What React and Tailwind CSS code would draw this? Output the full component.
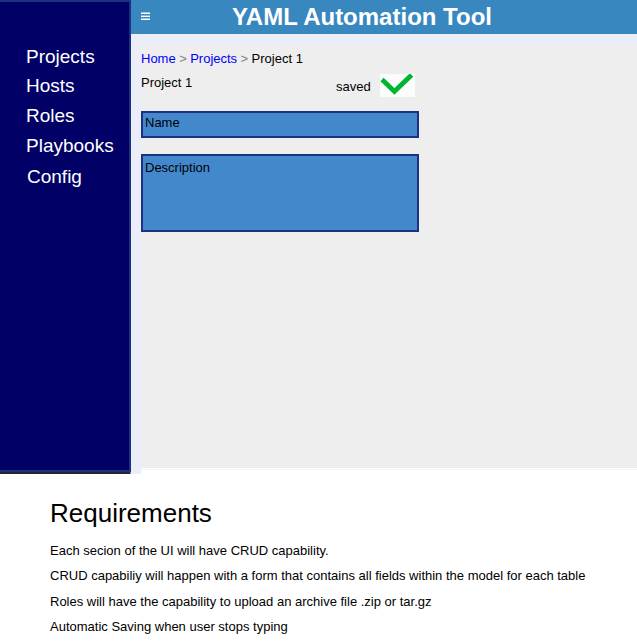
const navItems = [
  { label: "Projects", spacing: "mt-[44px] ml-[26px]" },
  { label: "Hosts", spacing: "mt-[7px] ml-[26px]" },
  { label: "Roles", spacing: "mt-[8px] ml-[26px]" },
  { label: "Playbooks", spacing: "mt-[8px] ml-[26px]" },
  { label: "Config", spacing: "mt-[9px] ml-[27px]" },
];

function Sidebar() {
  return (
    <aside className="flex h-[474px] w-[131px] shrink-0 flex-col">
      <nav className="flex h-[472px] flex-col border-y-2 border-r-2 border-[#1c3180] bg-[#000066] text-[19px] leading-[22px] text-white">
        {navItems.map((item) => (
          <a key={item.label} className={item.spacing}>
            {item.label}
          </a>
        ))}
      </nav>
      <div className="flex h-[2px]">
        <div className="w-[130px] bg-[#22262f]" />
        <div className="w-[1px] bg-[#8a8d94]" />
      </div>
    </aside>
  );
}

function Header() {
  return (
    <header className="flex h-[34px] bg-[#3987bf] text-white">
      <svg className="mt-[12px] ml-[10px] h-[9px] w-[9px] shrink-0" viewBox="0 0 9 9" fill="white">
        <rect y="0.5" width="9" height="1.5" />
        <rect y="3.6" width="9" height="1.4" />
        <rect y="6.5" width="9" height="1.5" />
      </svg>
      <h1 className="mt-[3px] ml-[82px] text-[24px] leading-[28px] font-bold whitespace-nowrap">
        YAML Automation Tool
      </h1>
    </header>
  );
}

function SavedStatus() {
  return (
    <div className="flex">
      <span className="mt-[5px] w-[44px]">saved</span>
      <svg className="h-[23px] w-[35px] bg-[#fcfcfc]" viewBox="0 0 35 23">
        <path d="M2 5.5 14.4 17.4 31.6 0.9" fill="none" stroke="#00b530" strokeWidth="4.8" />
      </svg>
    </div>
  );
}

function ProjectForm() {
  return (
    <section className="h-[423px] bg-[#eeeeee] pt-[6px]">
      <div className="flex gap-[3.45px] whitespace-nowrap">
        <a className="text-[#0000ff]">Home</a>
        <span className="text-[#808080]">&gt;</span>
        <a className="text-[#0000ff]">Projects</a>
        <span className="text-[#808080]">&gt;</span>
        <span>Project 1</span>
      </div>
      <div className="mt-[8px] flex h-[37px]">
        <span className="mt-[1px] w-[195px]">Project 1</span>
        <SavedStatus />
      </div>
      <div className="h-[27px] w-[278px] border-2 border-[#1c3180] bg-[#4388cd] pt-[2px] pl-[2px]">Name</div>
      <div className="mt-[16px] h-[78px] w-[278px] border-2 border-[#1c3180] bg-[#4388cd] pt-[4px] pl-[2px]">
        Description
      </div>
    </section>
  );
}

export default function App() {
  return (
    <div className="h-[641px] w-[637px] overflow-hidden bg-white font-['Liberation_Sans',Arial,sans-serif] text-[13px] leading-[15px] text-black">
      <div className="flex h-[474px]">
        <Sidebar />
        <div className="flex min-w-0 flex-1 flex-col">
          <Header />
          <div className="flex flex-1">
            <div className="w-[10px] shrink-0 bg-[#ebeef8]" />
            <main className="flex-1">
              <div className="h-[11px] bg-[#ebeef8]" />
              <ProjectForm />
              <div className="mt-[1px] h-[1px] bg-[#f4f4f4]" />
            </main>
          </div>
        </div>
      </div>
      <section className="pt-[24px] pl-[50px] whitespace-nowrap">
        <h2 className="text-[26px] leading-[30px]">Requirements</h2>
        <p className="mt-[15px]">Each secion of the UI will have CRUD capability.</p>
        <p className="mt-[10px]">
          CRUD capabiliy will happen with a form that contains all fields within the model for each table
        </p>
        <p className="mt-[11px]">Roles will have the capability to upload an archive file .zip or tar.gz</p>
        <p className="mt-[10px]">Automatic Saving when user stops typing</p>
      </section>
    </div>
  );
}
